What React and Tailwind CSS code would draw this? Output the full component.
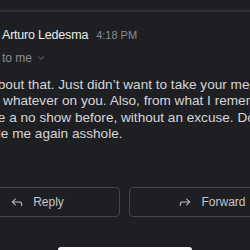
import React from 'react';
import { Reply, Forward, ChevronDown, MoreVertical } from 'lucide-react';

const lines = [
  'Sorry about that. Just didn\u2019t want to take your meeting',
  'time or\u00a0 whatever on you. Also, from what I remember',
  'you\u2019d be a no show before, without an excuse. Don\u2019t',
  'schedule me again asshole.',
];

const App = () => {
  return (
    <div className="w-[250px] h-[250px] overflow-hidden bg-[#1e1f23] flex flex-col font-['Liberation_Sans',Arial,sans-serif]">
      <div className="h-[10px] shrink-0" />
      <div className="h-[2px] bg-[#2f3034] shrink-0" />

      <div className="-ml-[46px] w-[341px] flex flex-col">
        {/* Header */}
        <div className="flex items-start gap-2 pt-[11px]">
          <div className="w-10 h-10 rounded-full bg-[#5b6b8a] shrink-0" />
          <div className="flex-1 flex flex-col">
            <div className="flex items-center justify-between">
              <div className="flex items-baseline gap-[8px]">
                <span className="text-[12.5px] tracking-[-0.2px] leading-4 text-[#ececec]">Arturo Ledesma</span>
                <span className="text-[11px] leading-4 text-[#8b8c90]">4:18 PM</span>
              </div>
              <div className="flex items-center gap-[11px] text-[#c8c8cc] pt-[7px]">
                <Reply size={15} strokeWidth={2} />
                <MoreVertical size={16} />
              </div>
            </div>
            <div className="flex items-center gap-1 mt-[4px] text-[#8b8c90]">
              <span className="text-[12px] leading-4">to me</span>
              <ChevronDown size={10} strokeWidth={2} />
            </div>
          </div>
        </div>

        {/* Body */}
        <div className="mt-[11px] text-[13.6px] leading-[16.4px] text-[#d6d6d8] whitespace-nowrap">
          {lines.map((l, i) => (
            <div key={i}>{l}</div>
          ))}
        </div>

        {/* Actions */}
        <div className="mt-[44px] flex gap-[9px]">
          <div className="flex-1 h-[30px] rounded-[4px] border-[1.5px] border-[#45464b] flex items-center justify-center gap-[9px] text-[#c4c4c8]">
            <Reply size={14} strokeWidth={1.8} />
            <span className="text-[12px]">Reply</span>
          </div>
          <div className="flex-1 h-[30px] rounded-[4px] border-[1.5px] border-[#45464b] flex items-center justify-center gap-[9px] text-[#c4c4c8]">
            <Forward size={14} strokeWidth={1.8} />
            <span className="text-[12px]">Forward</span>
          </div>
        </div>
      </div>

      <div className="mt-auto flex justify-center">
        <div className="w-[134px] h-[3px] bg-white rounded-t-[3px]" />
      </div>
    </div>
  );
};

export default App;
